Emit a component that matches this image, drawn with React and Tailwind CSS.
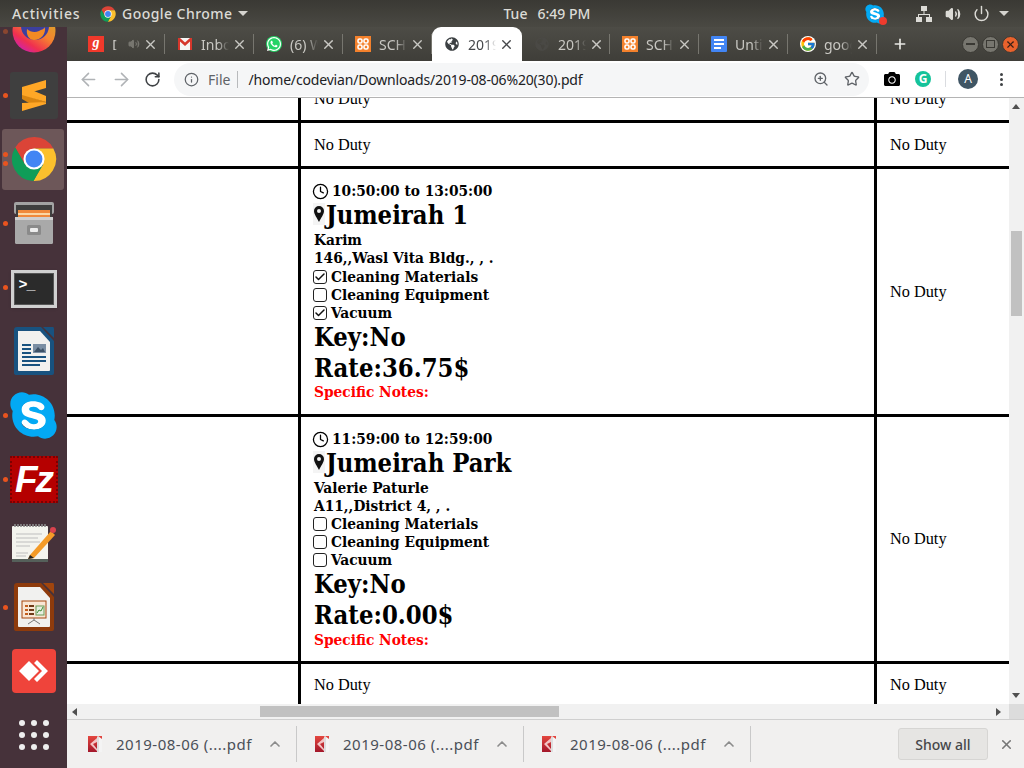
import { ArrowLeft, ArrowRight, RotateCw, Info, ZoomIn, Star, X, Plus, ChevronUp, Clock, Check, Power, Volume2 } from 'lucide-react'
import { FaSkype, FaWhatsapp, FaGlobeAmericas, FaCamera } from 'react-icons/fa'
import { FcGoogle } from 'react-icons/fc'

function ChromeLogo({ size }) {
  return (
    <svg width={size} height={size} viewBox="0 0 48 48">
      <path d="M14.47 29.5L4.37 12A23 23 0 0 1 44.2 13L24 13Z" fill="#db4437" />
      <path d="M24 13L44.2 13A23 23 0 0 1 23.43 47L33.53 29.5Z" fill="#fbc02d" />
      <path d="M33.53 29.5L23.43 47A23 23 0 0 1 4.37 12L14.47 29.5Z" fill="#0f9d58" />
      <circle cx="24" cy="24" r="11" fill="#fff" />
      <circle cx="24" cy="24" r="8.8" fill="#4285f4" />
    </svg>
  )
}

function Firefox() {
  return (
    <svg width="44" height="44" viewBox="0 0 44 44">
      <defs>
        <linearGradient id="ff" x1="0.9" y1="0.2" x2="0.35" y2="1">
          <stop offset="0" stopColor="#d9a62a" />
          <stop offset="0.45" stopColor="#f5822f" />
          <stop offset="0.8" stopColor="#f0304f" />
          <stop offset="1" stopColor="#d6249a" />
        </linearGradient>
      </defs>
      <circle cx="22" cy="22" r="21.5" fill="url(#ff)" />
      <circle cx="23" cy="17" r="14" fill="#3c3f9e" />
      <path d="M15 20c3 3 8 4 12 2s5-2 6-4c1 7-4 13-11 13-5 0-8-5-7-11z" fill="#f28a24" />
    </svg>
  )
}

function Sublime() {
  return (
    <div className="w-[48px] h-[47px] rounded-[3px] bg-[#3f3f3f] flex items-center justify-center">
      <svg width="24" height="31" viewBox="0 0 24 31">
        <path d="M0 14L24 22L12 26L0 19Z" fill="#d98510" />
        <path d="M0 7L24 0V8L0 15Z" fill="#ffa726" />
        <path d="M0 15L0 7L12 11L24 16V24L0 31V23L24 22Z" fill="#ffa726" />
      </svg>
    </div>
  )
}

function FilesIcon() {
  return (
    <svg width="42" height="44" viewBox="0 0 42 44">
      <rect x="1" y="1" width="40" height="12" rx="2" fill="#a3a3a3" />
      <rect x="3" y="4" width="36" height="16" fill="#3f3f3f" />
      <rect x="5" y="9" width="32" height="7" fill="#f08a3c" />
      <rect x="5" y="12" width="32" height="2" fill="#fbd7a5" />
      <rect x="2" y="16" width="38" height="27" rx="1.5" fill="#a9a9a9" />
      <rect x="2" y="16" width="38" height="3" fill="#d0d0d0" />
      <rect x="14" y="24" width="14" height="10" rx="1.5" fill="#8a8a8a" />
      <rect x="17" y="27" width="8" height="4" rx="1" fill="#ededed" />
    </svg>
  )
}

function TerminalIcon() {
  return (
    <div className="w-[46px] h-[38px] mt-[3px] bg-[#d0d0d0] p-[3px] shadow">
      <div className="w-full h-full bg-[#2b2b2b] border border-[#555] text-white font-bold text-[15px] leading-none font-['Liberation_Mono',monospace] pl-[4px] pt-[4px] tracking-[-1px]">
        &gt;_
      </div>
    </div>
  )
}

function OfficeDoc({ dark, corner, children }) {
  return (
    <svg width="40" height="48" viewBox="0 0 40 48">
      <path d="M3 0H27L40 14V46Q40 48 38 48H3Q0 48 0 46V3Q0 0 3 0Z" fill={dark} />
      <path d="M29 0H39Q40 0 40 2V11Z" fill={corner} />
      <path d="M4 4H26L36 15V43Q36 44 35 44H5Q4 44 4 43Z" fill="#f1f1ef" />
      {children}
    </svg>
  )
}

function WriterIcon() {
  return (
    <OfficeDoc dark="#18527f" corner="#18527f">
      <rect x="8" y="17" width="9" height="2" fill="#18527f" />
      <rect x="8" y="21" width="9" height="2" fill="#18527f" />
      <rect x="8" y="25" width="9" height="2" fill="#18527f" />
      <rect x="19" y="17" width="13" height="9" fill="#7a8ea3" />
      <path d="M20 25l4-5 3 3 2-2 2 4z" fill="#3d5166" />
      <rect x="8" y="29" width="24" height="2" fill="#18527f" />
      <rect x="8" y="33" width="24" height="2" fill="#18527f" />
      <rect x="8" y="37" width="18" height="2" fill="#18527f" />
    </OfficeDoc>
  )
}

function ImpressIcon() {
  return (
    <OfficeDoc dark="#8e3b0c" corner="#a0450d">
      <rect x="8" y="18" width="24" height="17" fill="#f9e6d5" stroke="#a5460f" />
      <rect x="11" y="22" width="3" height="2" fill="#c25d1c" />
      <rect x="11" y="26" width="3" height="2" fill="#c25d1c" />
      <rect x="11" y="30" width="3" height="2" fill="#c25d1c" />
      <rect x="15" y="22" width="5" height="2" fill="#6e3a17" />
      <rect x="15" y="26" width="5" height="2" fill="#6e3a17" />
      <rect x="15" y="30" width="5" height="2" fill="#6e3a17" />
      <rect x="22" y="23" width="8" height="9" fill="#e6eee0" stroke="#6a9a55" />
      <path d="M23 30l2-3 2 1 2-4" fill="none" stroke="#3f8a35" />
      <path d="M20 35v2M20 37l-6 4M20 37l6 4" stroke="#777" fill="none" />
    </OfficeDoc>
  )
}

function SkypeDock() {
  return (
    <div className="relative w-[46px] h-[46px] flex items-center justify-center">
      <div className="absolute w-[30px] h-[30px] bg-white rounded-full" />
      <FaSkype className="relative shrink-0 text-[#03a9f4]" size={53} />
    </div>
  )
}

function FileZilla() {
  return (
    <div className="w-[48px] h-[47px] bg-[#b50000] border-2 border-dotted border-[#7c0000] flex items-center justify-center text-white font-bold italic text-[37px] leading-none tracking-[-2px] font-['Liberation_Sans',sans-serif]">
      Fz
    </div>
  )
}

function Gedit() {
  return (
    <svg width="46" height="40" viewBox="0 0 46 40">
      <rect x="1" y="3" width="36" height="35" rx="1" fill="#f4f4ee" />
      <rect x="1" y="36" width="36" height="3" fill="#55605a" />
      <path d="M4 4v-3M7 4v-3M10 4v-3M13 4v-3M16 4v-3M19 4v-3M22 4v-3M25 4v-3M28 4v-3M31 4v-3M34 4v-3" stroke="#8a8a8a" strokeWidth="1.6" />
      <path d="M5 11h26M5 15h22M5 19h24M5 23h14M5 30h12M5 33h10" stroke="#bdbdbd" strokeWidth="1.2" />
      <path d="M19 32L40 8l4 4-21 23-6 1z" fill="#f49b28" />
      <path d="M19 32l4 3-6 1z" fill="#222" />
      <circle cx="42" cy="7" r="3" fill="#d9434e" />
    </svg>
  )
}

function AnyDesk() {
  return (
    <div className="w-[44px] h-[44px] rounded-[4px] bg-[#ef443b] flex items-center justify-center">
      <svg width="34" height="24" viewBox="0 0 34 24">
        <path d="M12 2L22 12L12 22L2 12Z" fill="#fff" />
        <path d="M20 1L31 12L20 23L17 20L25 12L17 4Z" fill="#fff" />
      </svg>
    </div>
  )
}

function AppGrid() {
  const dots = [0, 1, 2, 3, 4, 5, 6, 7, 8]
  return (
    <div className="grid grid-cols-3 gap-[6px]">
      {dots.map(d => <div key={d} className="w-[6px] h-[6px] rounded-full bg-[#eeeeee]" />)}
    </div>
  )
}

function DockSlot({ dots = 0, dim, active, children, className = '' }) {
  return (
    <div className={`relative h-[64px] shrink-0 flex items-center justify-center ${className}`}>
      {active && <div className="absolute left-[2px] right-[3px] top-[2px] bottom-[1px] rounded-[3px] bg-[#6d5759]" />}
      <div className="relative">{children}</div>
      {dots > 0 && (
        <div className="absolute left-[3px] top-0 bottom-0 flex flex-col justify-center gap-[4px]">
          {Array.from({ length: dots }).map((_, i) => (
            <div key={i} className={`w-[5px] h-[5px] rounded-full ${dim ? 'bg-[#8a4630]' : 'bg-[#e9541f]'}`} />
          ))}
        </div>
      )}
    </div>
  )
}

function Dock() {
  return (
    <div className="w-[67px] shrink-0 bg-[#46323a] flex flex-col overflow-hidden">
      <DockSlot dots={1} dim className="-mt-[28px]"><Firefox /></DockSlot>
      <DockSlot dots={1}><Sublime /></DockSlot>
      <DockSlot dots={2} active><ChromeLogo size={46} /></DockSlot>
      <DockSlot dots={1}><FilesIcon /></DockSlot>
      <DockSlot dots={1}><TerminalIcon /></DockSlot>
      <DockSlot><WriterIcon /></DockSlot>
      <DockSlot dots={1}><SkypeDock /></DockSlot>
      <DockSlot dots={1}><FileZilla /></DockSlot>
      <DockSlot><Gedit /></DockSlot>
      <DockSlot dots={1}><ImpressIcon /></DockSlot>
      <DockSlot><AnyDesk /></DockSlot>
      <DockSlot><AppGrid /></DockSlot>
    </div>
  )
}

function TopBar() {
  return (
    <div className="h-[27px] shrink-0 bg-gradient-to-b from-[#3a3934] to-[#4a4943] flex items-center relative text-[#dcdbd6] text-[14px] font-medium font-['Noto_Sans',sans-serif]">
      <span className="ml-[12px] w-[88px] tracking-[0.8px]">Activities</span>
      <ChromeLogo size={16} />
      <span className="ml-[6px] tracking-[0.45px]">Google Chrome</span>
      <div className="ml-[6px] w-0 h-0 border-x-[5px] border-x-transparent border-t-[5px] border-t-[#d5d4cf]" />
      <span className="ml-[255px]">Tue</span>
      <span className="ml-[10px]">6:49 PM</span>
      <div className="ml-[274px] relative">
        <div className="absolute left-[5px] top-[5px] w-[12px] h-[12px] bg-white rounded-full" />
        <FaSkype className="relative text-[#03a9f4]" size={22} />
        <div className="absolute right-[-1px] bottom-0 w-[8px] h-[8px] rounded-full bg-[#ef3b2d]" />
      </div>
      <svg className="ml-[30px]" width="16" height="16" viewBox="0 0 16 16" fill="#dcdbd6">
        <rect x="5" y="0" width="6" height="5" />
        <rect x="0" y="11" width="6" height="5" />
        <rect x="10" y="11" width="6" height="5" />
        <path d="M7.5 5h1v3H14v3h-1V9H3v2H2V8h5.5z" />
      </svg>
      <Volume2 className="ml-[13px]" size={16} color="#dcdbd6" fill="#dcdbd6" />
      <Power className="ml-[12px]" size={17} color="#dcdbd6" />
      <div className="ml-[9px] w-0 h-0 border-x-[5px] border-x-transparent border-t-[5px] border-t-[#d5d4cf]" />
    </div>
  )
}

function Gmail() {
  return (
    <svg width="14" height="12" viewBox="0 0 14 12">
      <rect width="14" height="12" fill="#f5f5f5" />
      <path d="M0 0h2l5 4.5L12 0h2v12h-2V3.5L7 8 2 3.5V12H0z" fill="#d6372c" />
    </svg>
  )
}

function Xampp() {
  return (
    <div className="w-[16px] h-[16px] bg-[#f4812c] flex items-center justify-center">
      <svg width="12" height="12" viewBox="0 0 12 12" fill="none" stroke="#fff" strokeWidth="1.6">
        <rect x="1" y="1" width="4" height="4" rx="1.5" />
        <rect x="7" y="1" width="4" height="4" rx="1.5" />
        <rect x="1" y="7" width="4" height="4" rx="1.5" />
        <rect x="7" y="7" width="4" height="4" rx="1.5" />
      </svg>
    </div>
  )
}

function Docs() {
  return (
    <div className="w-[16px] h-[16px] rounded-[1px] bg-[#4285f4] flex flex-col gap-[2px] pl-[3px] pt-[3px]">
      <div className="w-[10px] h-[2px] bg-white" />
      <div className="w-[10px] h-[2px] bg-white" />
      <div className="w-[7px] h-[2px] bg-white" />
    </div>
  )
}

const TABS = [
  { title: 'D', clip: 'w-[5px]', icon: <div className="w-[16px] h-[16px] bg-[#f0392b] text-white italic font-bold text-[14px] leading-[14px] text-center font-['Liberation_Serif',serif]">g</div>, speaker: true },
  { title: 'Inbox', icon: <Gmail /> },
  { title: '(6) WhatsApp', icon: <div className="w-[16px] h-[16px] rounded-full bg-[#25d366] flex items-center justify-center"><FaWhatsapp size={16} color="#fff" /></div> },
  { title: 'SCHEDULE', icon: <Xampp /> },
  { title: '2019-08-06', active: true, icon: <FaGlobeAmericas size={14} color="#3c4043" /> },
  { title: '2019-08-06', narrow: true, icon: <FaGlobeAmericas size={14} color="#4a4945" /> },
  { title: 'SCHEDULE', icon: <Xampp /> },
  { title: 'Untitled', icon: <Docs /> },
  { title: 'google', icon: <FcGoogle size={16} className="bg-white rounded-full" /> },
]

function Tab({ tab }) {
  const color = tab.active ? 'text-[#45474a]' : 'text-[#c9c8c3]'
  const width = tab.active ? 'w-[90px] bg-white rounded-t-[9px]' : tab.narrow ? 'w-[88px]' : 'w-[89px]'
  return (
    <div className={`relative shrink-0 h-[34px] flex items-center pl-[12px] ${width}`}>
      <div className="w-[16px] flex justify-center shrink-0">{tab.icon}</div>
      <div className={`ml-[8px] overflow-hidden whitespace-nowrap text-[14px] font-['Noto_Sans',sans-serif] [mask-image:linear-gradient(to_right,black_60%,transparent)] ${tab.clip || 'w-[28px]'} ${color}`}>{tab.title}</div>
      {tab.speaker && <Volume2 className="ml-[11px]" size={12} color="#77766f" fill="#77766f" />}
      <X className={`absolute left-[67px] ${color}`} size={15} strokeWidth={2.2} />
      {!tab.active && <div className="absolute right-0 top-[7px] h-[20px] w-px bg-[#77766f]" />}
    </div>
  )
}

function WindowButton({ children, className }) {
  return (
    <div className={`w-[17px] h-[17px] rounded-full flex items-center justify-center border border-[#3a3934] ${className}`}>{children}</div>
  )
}

function TabStrip() {
  return (
    <div className="h-[34px] shrink-0 bg-gradient-to-b from-[#4d4c46] to-[#3f3e39] flex items-center pl-[9px]">
      {TABS.map((t, i) => <Tab key={i} tab={t} />)}
      <Plus className="ml-[15px]" size={16} strokeWidth={2.5} color="#e8e7e3" />
      <div className="ml-[54px] flex gap-[3px]">
        <WindowButton className="bg-[#77766f]"><div className="w-[9px] h-[2px] bg-[#3a3934]" /></WindowButton>
        <WindowButton className="bg-[#77766f]"><div className="w-[9px] h-[8px] border border-[#3a3934]" /></WindowButton>
        <WindowButton className="bg-[#e9622c]"><X size={11} color="#3a2018" strokeWidth={2.5} /></WindowButton>
      </div>
    </div>
  )
}

function Toolbar() {
  return (
    <div className="h-[37px] shrink-0 bg-white flex items-center border-b border-[#b4b4b4] relative z-10">
      <ArrowLeft className="ml-[11px]" size={21} color="#b0b3b6" strokeWidth={1.8} />
      <ArrowRight className="ml-[12px]" size={21} color="#b0b3b6" strokeWidth={1.8} />
      <RotateCw className="ml-[12px]" size={17} color="#3f4245" strokeWidth={2.2} />
      <div className="ml-[13px] w-[695px] h-[33px] rounded-full bg-[#f5f6f7] flex items-center pl-[10px] text-[14px] font-['Noto_Sans',sans-serif]">
        <Info size={15} color="#5f6368" />
        <span className="ml-[9px] text-[#5f6368]">File</span>
        <div className="ml-[7px] w-px h-[17px] bg-[#b8babc]" />
        <span className="ml-[10px] text-[#202124] tracking-[-0.17px]">/home/codevian/Downloads/2019-08-06%20(30).pdf</span>
        <ZoomIn className="ml-auto" size={16} color="#5f6368" />
        <Star className="ml-[15px] mr-[9px]" size={16} color="#5f6368" />
      </div>
      <FaCamera className="ml-[15px]" size={16} color="#000" />
      <div className="ml-[15px] w-[16px] h-[16px] rounded-full bg-[#15c39a] text-white text-[12px] leading-[16px] font-bold text-center font-['Noto_Sans',sans-serif]">G</div>
      <div className="ml-[14px] w-px h-[16px] bg-[#dadce0]" />
      <div className="ml-[12px] w-[20px] h-[20px] rounded-full bg-[#3f5564] text-white text-[12px] leading-[20px] text-center font-['Noto_Sans',sans-serif]">A</div>
      <div className="ml-[22px] flex flex-col gap-[2px]">
        <div className="w-[3px] h-[3px] rounded-full bg-[#3f4245]" />
        <div className="w-[3px] h-[3px] rounded-full bg-[#3f4245]" />
        <div className="w-[3px] h-[3px] rounded-full bg-[#3f4245]" />
      </div>
    </div>
  )
}

function CheckLine({ label, checked }) {
  return (
    <div className="h-[18px] flex items-center text-[15.3px]">
      <div className="w-[14px] h-[14px] -ml-[1px] border border-[#222] rounded-[3px] flex items-center justify-center mr-[4px]">
        {checked && <Check size={12} strokeWidth={3} color="#111" />}
      </div>
      {label}
    </div>
  )
}

function Job({ time, place, name, address, materials, equipment, vacuum, rate, tight }) {
  return (
    <div className="pt-[13px] text-black font-['DejaVu_Serif',serif] font-bold [font-stretch:condensed]">
      <div className="h-[18px] flex items-center text-[15.3px]">
        <Clock size={17} strokeWidth={1.8} className="-ml-[2px] mr-[3px]" />
        {time}
      </div>
      <div className="h-[32px] pb-[2px] flex items-center text-[25.4px]">
        <div className="w-[12px] h-[22px] -ml-[1px] mr-[1px] bg-[#f4f4f4] flex items-center justify-center mt-[-2px]">
          <svg width="10" height="16" viewBox="0 0 10 16">
            <path fillRule="evenodd" d="M5 0a5 5 0 0 1 5 5c0 3-3 7-5 11C3 12 0 8 0 5a5 5 0 0 1 5-5zm0 3a2 2 0 1 0 0 4 2 2 0 0 0 0-4z" fill="#111" />
          </svg>
        </div>
        {place}
      </div>
      <div className="h-[17px] flex items-center text-[15.3px]">{name}</div>
      <div className={`flex items-center text-[15.3px] ${tight ? 'h-[18px]' : 'h-[19px]'}`}>{address}</div>
      <CheckLine label="Cleaning Materials" checked={materials} />
      <CheckLine label="Cleaning Equipment" checked={equipment} />
      <CheckLine label="Vacuum" checked={vacuum} />
      <div className="h-[31px] flex items-center text-[25.4px]">Key:No</div>
      <div className="h-[31px] flex items-center text-[25.4px]">Rate:{rate}</div>
      <div className={`flex items-center text-[15.3px] text-[#ff0000] ${tight ? 'h-[18px]' : 'h-[16px]'}`}>Specific Notes:</div>
    </div>
  )
}

function NoDuty({ className = 'mt-[1px]' }) {
  return <div className={`text-[16.3px] text-black font-['Liberation_Serif',serif] ${className}`}>No Duty</div>
}

function Row({ height, middle, clipped, last }) {
  const align = clipped ? 'items-start' : 'items-center'
  const duty = clipped ? <NoDuty className="-mt-[11px]" /> : <NoDuty />
  return (
    <div className={`flex shrink-0 ${last ? '' : 'border-b-[3px] border-black'} ${height}`}>
      <div className="w-[234px] shrink-0 border-r-[3px] border-black" />
      <div className={`w-[576px] shrink-0 border-r-[3px] border-black pl-[13px] flex ${middle ? '' : align}`}>
        {middle || duty}
      </div>
      <div className={`flex-1 pl-[13px] flex ${align}`}>{duty}</div>
    </div>
  )
}

function VScroll() {
  return (
    <div className="w-[15px] shrink-0 bg-[#f1f1f1] relative">
      <div className="absolute left-[3px] top-[6px] w-0 h-0 border-x-[4px] border-x-transparent border-b-[5px] border-b-[#505050]" />
      <div className="absolute left-[2px] top-[133px] w-[11px] h-[85px] bg-[#c1c1c1]" />
      <div className="absolute left-[3px] bottom-[6px] w-0 h-0 border-x-[4px] border-x-transparent border-t-[5px] border-t-[#505050]" />
    </div>
  )
}

function HScroll() {
  return (
    <div className="h-[15px] shrink-0 bg-[#f1f1f1] flex items-center">
      <div className="ml-[5px] w-0 h-0 border-y-[4px] border-y-transparent border-r-[5px] border-r-[#505050]" />
      <div className="ml-[183px] w-[299px] h-[11px] bg-[#c1c1c1]" />
      <div className="ml-[437px] w-0 h-0 border-y-[4px] border-y-transparent border-l-[5px] border-l-[#505050]" />
      <div className="ml-auto w-[15px] h-[15px] bg-[#dcdcdc]" />
    </div>
  )
}

function PdfIcon() {
  return (
    <svg width="14" height="16" viewBox="0 0 14 16">
      <defs>
        <linearGradient id="pdf" x1="0" y1="0" x2="0" y2="1">
          <stop offset="0" stopColor="#e4473f" />
          <stop offset="1" stopColor="#a3172a" />
        </linearGradient>
      </defs>
      <rect width="14" height="16" fill="url(#pdf)" />
      <path d="M10 0l4 3v13H9V1z" fill="#f4f4f4" />
      <path d="M2 8l7-6v4L5 8l4 5v2z" fill="#f3c4c4" />
      <path d="M10 1v15" stroke="#b5b5b5" strokeWidth="0.7" />
    </svg>
  )
}

function DownloadItem() {
  return (
    <div className="w-[227px] h-[36px] shrink-0 border-r border-[#c9c9c9] flex items-center pl-[18px] font-['Noto_Sans',sans-serif] text-[15px] tracking-[0.5px] text-[#4a4f57]">
      <PdfIcon />
      <span className="ml-[14px] whitespace-nowrap">2019-08-06 (....pdf</span>
      <ChevronUp className="ml-[15px]" size={16} color="#8c8c8c" strokeWidth={2.5} />
    </div>
  )
}

function DownloadBar() {
  return (
    <div className="h-[49px] shrink-0 bg-[#f1f0ef] border-t border-[#cfcfcf] flex items-center pl-[3px]">
      <DownloadItem />
      <DownloadItem />
      <DownloadItem />
      <div className="ml-[147px] w-[90px] h-[32px] rounded-[3px] bg-[#e6e5e3] border border-[#d6d5d3] text-[14px] text-[#45474a] font-medium flex items-center justify-center font-['Noto_Sans',sans-serif]">Show all</div>
      <X className="ml-[11px]" size={15} color="#777" strokeWidth={2.5} />
    </div>
  )
}

export default function App() {
  return (
    <div className="w-[1024px] h-[768px] overflow-hidden flex flex-col bg-white">
      <TopBar />
      <div className="flex-1 flex min-h-0">
        <Dock />
        <div className="flex-1 flex flex-col min-w-0">
          <TabStrip />
          <Toolbar />
          <div className="flex-1 flex min-h-0">
            <div className="flex-1 overflow-hidden flex flex-col">
              <Row height="h-[25px]" clipped />
              <Row height="h-[46px]" />
              <Row
                height="h-[248px]"
                middle={<Job time="10:50:00 to 13:05:00" place="Jumeirah 1" name="Karim" address="146,,Wasl Vita Bldg., , ." materials vacuum rate="36.75$" />}
              />
              <Row
                height="h-[247px]"
                middle={<Job tight time="11:59:00 to 12:59:00" place="Jumeirah Park" name="Valerie Paturle" address="A11,,District 4, , ." rate="0.00$" />}
              />
              <Row height="h-[42px]" last />
            </div>
            <VScroll />
          </div>
          <HScroll />
          <DownloadBar />
        </div>
      </div>
    </div>
  )
}
